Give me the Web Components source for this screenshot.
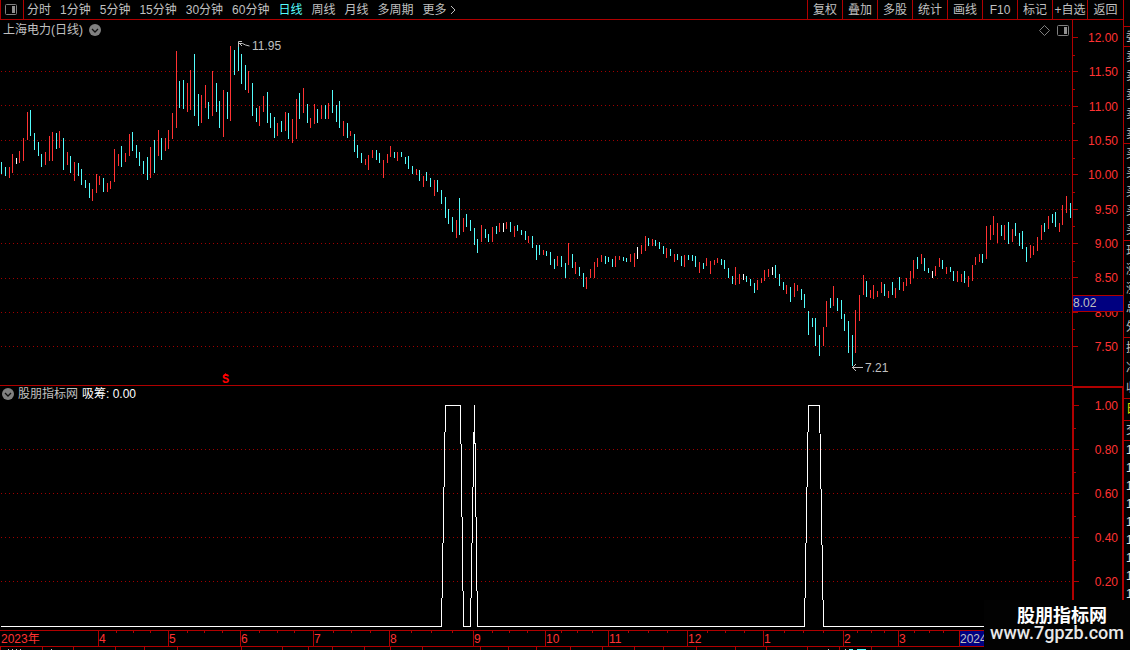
<!DOCTYPE html>
<html lang="zh-CN">
<head>
<meta charset="utf-8">
<title>上海电力(日线)</title>
<style>
  :root {
    --line: #b00000;
    --up: #ff3232;
    --down: #54fcfc;
    --text: #c0c0c0;
  }

  body {
    margin: 0;
    background: #000;
    color: var(--text);
    font: 12px/14px "Liberation Sans", "Noto Sans CJK SC", sans-serif;
  }
</style>
</head>
<body>
<stock-terminal></stock-terminal>

<script>
// x, high, low, colour (r = up, c = down, w = unchanged)
const BARS = `
1 162 174 c,5 167 176 c,9 167 178 r,12 154 173 r,16 158 164 w,19 151 163 r,23 138 161 r,27 112 140 r,
30 110 136 c,34 133 150 c,38 142 156 c,41 154 167 c,45 152 165 r,49 136 161 r,52 132 161 r,56 133 149 c,
59 131 148 r,63 138 170 c,67 152 165 r,70 156 173 c,74 162 181 r,78 163 176 c,81 169 185 c,85 180 188 c,
89 183 198 c,92 189 201 r,96 174 193 r,99 176 185 r,103 178 192 c,107 183 192 r,110 181 189 r,114 149 182 r,
118 154 166 r,121 146 167 c,125 153 162 r,129 134 156 r,132 132 151 c,136 145 158 c,139 152 166 c,143 161 174 c,
147 157 180 c,150 147 178 r,154 140 173 c,158 130 156 r,161 138 160 c,165 138 151 r,168 130 149 r,172 113 139 r,
176 51 128 r,179 81 108 c,183 80 109 c,187 83 112 r,190 70 110 r,194 54 116 c,198 94 126 c,201 95 123 r,
205 85 108 r,208 102 119 c,212 71 116 r,216 83 112 c,219 101 128 c,223 90 137 r,227 92 119 c,230 46 121 r,
234 50 75 c,238 42 71 c,241 54 84 c,245 65 90 c,248 71 93 r,252 83 116 c,256 108 122 c,259 106 126 r,
263 96 112 r,267 92 123 c,270 113 128 c,274 117 138 c,277 123 136 r,281 121 132 c,285 112 131 r,288 113 139 c,
292 119 143 r,296 99 139 r,299 93 119 c,303 88 113 r,307 104 123 c,310 118 128 r,314 104 124 r,317 109 123 c,
321 105 119 r,325 105 119 c,328 103 119 r,332 90 113 c,336 105 122 c,339 101 128 c,343 121 136 r,347 123 138 c,
350 131 136 r,354 134 152 c,357 145 158 c,361 153 163 c,365 159 165 r,368 155 170 r,372 150 158 r,376 150 160 c,
379 153 163 c,383 160 178 r,387 154 163 r,390 146 157 r,394 152 158 c,397 152 161 r,401 152 157 c,405 157 164 c,
408 156 169 c,412 166 174 c,416 169 175 r,419 170 181 c,423 176 187 r,426 172 181 c,430 178 187 c,434 180 196 r,
437 180 192 c,441 190 204 c,445 197 218 c,448 209 224 c,452 217 232 c,456 220 238 r,459 198 235 c,463 218 232 r,
466 214 227 c,470 220 231 c,474 228 245 c,477 239 253 c,481 225 242 r,485 229 238 c,488 234 242 c,492 227 242 r,
496 226 234 c,499 223 232 r,503 223 232 w,506 222 229 r,510 222 232 c,514 226 237 r,517 225 231 c,521 230 235 c,
525 231 240 c,528 236 243 r,532 236 248 c,536 245 260 c,539 245 255 c,543 250 255 r,546 251 256 c,550 252 265 c,
554 259 269 c,557 256 266 r,561 256 267 c,565 263 278 c,568 243 265 r,572 254 268 c,575 262 274 r,579 267 276 c,
583 273 287 c,586 277 289 r,590 269 278 r,594 262 278 r,597 258 267 r,601 255 262 r,605 256 264 c,608 257 262 c,
612 259 267 c,615 256 267 r,619 256 260 r,623 257 261 c,626 258 262 c,630 254 262 r,634 253 267 r,637 247 259 w,
641 245 254 r,645 236 251 r,648 238 246 c,652 239 246 r,655 240 246 c,659 242 249 c,663 246 254 c,666 248 258 r,
670 249 256 c,674 254 262 r,677 254 260 c,681 256 266 c,684 255 267 r,688 255 260 c,692 255 261 c,695 256 267 c,
699 262 273 r,703 263 269 c,706 258 266 r,710 261 274 r,714 260 265 r,717 258 263 r,721 259 265 c,724 260 269 c,
728 268 278 c,732 276 284 c,735 267 285 r,739 274 284 r,743 274 280 w,746 276 282 c,750 279 286 c,754 283 293 c,
757 280 290 r,761 278 283 r,764 270 281 r,768 269 277 r,772 267 275 w,775 265 278 c,779 274 286 c,783 282 290 c,
786 285 294 r,790 287 302 c,794 283 297 r,797 285 291 r,801 289 300 c,804 294 308 c,808 311 335 c,812 318 327 c,
815 318 346 c,819 335 356 c,823 327 346 r,826 301 327 r,830 298 308 c,833 286 306 r,837 298 311 c,841 300 319 c,
844 314 331 c,848 321 353 c,852 335 366 c,855 310 353 r,859 295 321 r,863 275 295 r,866 281 297 c,870 290 298 r,
873 285 299 r,877 291 297 r,881 282 293 r,884 284 296 c,888 291 298 r,892 282 295 c,895 288 298 r,899 277 290 c,
903 282 291 r,906 278 286 r,910 271 284 r,913 260 278 r,917 257 269 c,921 254 264 r,924 258 271 c,928 268 273 c,
932 271 278 w,935 266 276 r,939 258 267 r,942 260 269 c,946 267 274 r,950 267 272 c,953 271 281 c,957 271 282 r,
961 274 282 r,964 271 283 c,968 276 287 r,972 265 281 r,975 257 265 r,979 254 262 r,982 254 263 c,986 226 259 r,
990 225 240 r,993 216 235 r,997 223 243 r,1001 225 236 c,1004 225 240 r,1008 222 244 c,1012 229 242 r,
1015 223 236 c,1019 233 246 c,1022 231 249 c,1026 247 262 c,1030 245 258 r,1033 246 255 r,1037 237 251 r,
1041 225 240 r,1044 223 232 c,1048 216 229 r,1052 214 223 c,1055 212 227 c,1059 223 232 r,1062 205 225 r,
1066 196 213 r,1070 203 218 c`;

const COLORS = { r: "#ff3232", c: "#54fcfc", w: "#ffffff" };

const dottedRows = (rows) => rows
  .map((y) => `<path d="M1 ${y}.5H1072" stroke="#a00000" stroke-dasharray="1 3"/>`)
  .join("");

const panelIcon = `
  <svg width="12" height="11" viewBox="0 0 12 11" aria-hidden="true">
    <rect x=".5" y=".5" width="11" height="10" rx="1" fill="none" stroke="#808080"/>
    <rect x="7" y="2" width="3" height="7" fill="#909090"/>
  </svg>`;

const chevronIcon = `
  <svg width="12" height="12" viewBox="0 0 12 12" aria-hidden="true">
    <circle cx="6" cy="6" r="6" fill="#808080"/>
    <path d="M3 5l3 3 3-3" fill="none" stroke="#101010" stroke-width="1.3"/>
  </svg>`;

const buttonReset = `
  button {
    margin: 0;
    padding: 0;
    border: 0;
    background: none;
    color: inherit;
    font: inherit;
    white-space: nowrap;
    cursor: pointer;
  }
  button svg { display: block; }`;

class StockTerminal extends HTMLElement {
  constructor() {
    super();
    this.attachShadow({ mode: "open" });
  }

  connectedCallback() {
    this.shadowRoot.innerHTML = `
      <style>
        :host {
          display: flex;
          position: relative;
          height: 100vh;
          overflow: hidden;
        }
        main {
          flex: 1;
          min-width: 0;
          display: flex;
          flex-direction: column;
        }
        .pane { display: flex; min-height: 0; }
        .price { flex: 366 0 0; }
        .indicator { flex: 244 0 0; }
      </style>
      <main>
        <period-bar></period-bar>
        <div class="pane price">
          <price-chart></price-chart>
          <value-axis labels="12.00,11.50,11.00,10.50,10.00,9.50,9.00,8.50,8.00,7.50" current="8.02"></value-axis>
        </div>
        <div class="pane indicator">
          <indicator-chart></indicator-chart>
          <value-axis framed labels="1.00,0.80,0.60,0.40,0.20"></value-axis>
        </div>
        <time-axis></time-axis>
        <tab-edge></tab-edge>
      </main>
      <quote-strip></quote-strip>
      <site-mark>
        <span slot="name">股朋指标网</span>
        <span slot="url">www.7gpzb.com</span>
      </site-mark>
    `;
  }
}

class PeriodBar extends HTMLElement {
  constructor() {
    super();
    this.attachShadow({ mode: "open" });
  }

  connectedCallback() {
    const periods = ["分时", "1分钟", "5分钟", "15分钟", "30分钟", "60分钟", "日线", "周线", "月线", "多周期"];
    const tools = ["复权", "叠加", "多股", "统计", "画线", "F10", "标记", "+自选", "返回"];

    this.shadowRoot.innerHTML = `
      <style>
        :host {
          display: flex;
          box-sizing: border-box;
          height: 20px;
          border-bottom: 1px solid var(--line);
        }
        ${buttonReset}
        .layout {
          box-sizing: border-box;
          width: 24px;
          padding: 0 4px;
          border: solid var(--line);
          border-width: 0 1px;
        }
        nav {
          flex: 1;
          display: flex;
          gap: 9px;
          padding-left: 3px;
          overflow: hidden;
        }
        .active { color: var(--down); }
        .more { display: flex; align-items: center; gap: 3px; }
        .tools { display: flex; }
        .tools button {
          box-sizing: border-box;
          width: 35px;
          border-left: 1px solid var(--line);
        }
        .tools button:last-child { width: 36px; }
      </style>
      <button class="layout" aria-label="布局">${panelIcon}</button>
      <nav>
        ${periods.map((p) => `<button${p === "日线" ? ' class="active"' : ""}>${p}</button>`).join("")}
        <button class="more">更多
          <svg width="7" height="10" viewBox="0 0 7 10" aria-hidden="true"><path d="M1 1l4 4-4 4" fill="none" stroke="#c0c0c0"/></svg>
        </button>
      </nav>
      <div class="tools">${tools.map((t) => `<button>${t}</button>`).join("")}</div>
    `;
  }
}

class PriceChart extends HTMLElement {
  constructor() {
    super();
    this.attachShadow({ mode: "open" });
  }

  connectedCallback() {
    const bars = BARS.trim().split(",").map((bar) => {
      const [x, high, low, kind] = bar.trim().split(" ");
      return `<rect x="${x}" y="${high}" width="1" height="${low - high}" fill="${COLORS[kind]}"/>`;
    }).join("");

    // marks follow the bars when the pane is resized
    const place = (x, y) => `left:${x / 1072 * 100}%;top:${(y - 20) / 365 * 100}%`;

    this.shadowRoot.innerHTML = `
      <style>
        :host {
          flex: 1;
          min-width: 0;
          display: block;
          position: relative;
          border-bottom: 1px solid var(--line);
        }
        ${buttonReset}
        .plot {
          position: absolute;
          inset: 0;
          width: 100%;
          height: 100%;
        }
        header {
          position: relative;
          display: flex;
          align-items: center;
          gap: 6px;
          padding: 3px 3px 0 3px;
        }
        h1 { margin: 0; font: inherit; }
        .end { margin-left: auto; display: flex; align-items: center; gap: 7px; }
        .mark {
          position: absolute;
          display: flex;
          align-items: center;
          gap: 2px;
        }
        .signal {
          flex-direction: column;
          gap: 0;
          color: #f00;
          font: bold 12px/9px "Liberation Mono", monospace;
        }
      </style>
      <svg class="plot" viewBox="0 20 1072 365" preserveAspectRatio="none" shape-rendering="crispEdges" aria-hidden="true">
        ${dottedRows([71, 105, 140, 174, 209, 243, 278, 312, 346])}
        ${bars}
      </svg>
      <header>
        <h1>上海电力(日线)</h1>
        <button aria-label="展开">${chevronIcon}</button>
        <div class="end">
          <button aria-label="标记">
            <svg width="11" height="11" viewBox="0 0 11 11"><path d="M5.500 .5l5 5-5 5-5-5z" fill="none" stroke="#808080"/></svg>
          </button>
          <button aria-label="侧栏">${panelIcon}</button>
        </div>
      </header>
      <div class="mark" style="${place(238, 39)}">
        <svg width="12" height="10" viewBox="0 0 12 10"><path d="M4 .5H.5V6M.5 2.500h4l3 1.500 4 1M1 2l3 3" fill="none" stroke="#c0c0c0"/></svg>
        11.95
      </div>
      <div class="mark" style="${place(852, 361)}">
        <svg width="11" height="10" viewBox="0 0 11 10"><path d="M0 4.500h11M4 1L.5 4.500 4 8" fill="none" stroke="#c0c0c0"/></svg>
        7.21
      </div>
      <div class="mark signal" style="${place(222, 373)}">
        <svg width="5" height="3" viewBox="0 0 5 3"><path d="M2.500 0L5 3H0z" fill="#f00"/></svg>
        S
      </div>
    `;
  }
}

class IndicatorChart extends HTMLElement {
  constructor() {
    super();
    this.attachShadow({ mode: "open" });
  }

  connectedCallback() {
    this.shadowRoot.innerHTML = `
      <style>
        :host {
          flex: 1;
          min-width: 0;
          display: block;
          position: relative;
        }
        ${buttonReset}
        .plot {
          position: absolute;
          inset: 0;
          width: 100%;
          height: 100%;
        }
        header {
          position: relative;
          display: flex;
          align-items: center;
          gap: 4px;
          padding: 1px 2px;
        }
        output { color: #fff; }
      </style>
      <svg class="plot" viewBox="0 386 1072 244" preserveAspectRatio="none" shape-rendering="crispEdges" aria-hidden="true">
        ${dottedRows([449, 493, 537, 581])}
        <path transform="translate(.5 .5)" fill="none" stroke="#fff"
          d="M0 626H441L445 405H460L463 626H470L474 405L477 626H804L808 405H819L823 626H1072"/>
      </svg>
      <header>
        <button aria-label="指标">${chevronIcon}</button>
        <span>股朋指标网</span>
        <output>吸筹: 0.00</output>
      </header>
    `;
  }
}

class ValueAxis extends HTMLElement {
  constructor() {
    super();
    this.attachShadow({ mode: "open" });
  }

  connectedCallback() {
    const labels = this.getAttribute("labels").split(",");
    const current = this.getAttribute("current");

    this.shadowRoot.innerHTML = `
      <style>
        :host {
          box-sizing: border-box;
          position: relative;
          display: flex;
          flex-direction: column;
          justify-content: space-between;
          width: 51px;
          padding: 11px 5px 32px 0;
          border-left: 1px solid var(--line);
          color: var(--up);
          text-align: right;
        }
        :host([framed]) {
          padding: 11px 4px 41px 0;
          border: solid var(--line);
          border-width: 2px 1px 0 2px;
        }
        .row { position: relative; }
        .row::before {
          content: "";
          position: absolute;
          left: 0;
          top: 6px;
          width: 5px;
          height: 1px;
          background: var(--line);
        }
        /* half steps */
        .half {
          width: 2px;
          height: 1px;
          background: var(--line);
        }
        .current {
          position: absolute;
          top: 75%;
          left: 0;
          right: 0;
          height: 15px;
          border: solid var(--line);
          border-width: 1px 0;
          background: #000080;
          color: var(--text);
          text-align: left;
        }
      </style>
      ${labels.map((l) => `<div class="row">${l}</div>`).join('<div class="half"></div>')}
      ${current ? `<div class="current">${current}</div>` : ""}
    `;
  }
}

class TimeAxis extends HTMLElement {
  constructor() {
    super();
    this.attachShadow({ mode: "open" });
  }

  connectedCallback() {
    // label and share of the width
    const months = [
      ["2023年", 98], ["4", 70], ["5", 72], ["6", 73], ["7", 76], ["8", 84], ["9", 72], ["10", 63],
      ["11", 79], ["12", 76], ["1", 80], ["2", 55], ["3", 61], ["2024", 164],
    ];

    this.shadowRoot.innerHTML = `
      <style>
        :host {
          box-sizing: border-box;
          display: grid;
          grid-template-columns: ${months.map(([, share]) => `minmax(0, ${share}fr)`).join(" ")};
          height: 17px;
          border: solid var(--line);
          border-width: 1px 0;
          color: var(--up);
          line-height: 16px;
        }
        .month {
          overflow: hidden;
          border-left: 1px solid var(--line);
          background:
            linear-gradient(var(--line), var(--line)) 25% 0 / 1px 2px no-repeat,
            linear-gradient(var(--line), var(--line)) 50% 0 / 1px 2px no-repeat,
            linear-gradient(var(--line), var(--line)) 75% 0 / 1px 2px no-repeat;
        }
        .month:first-of-type { border: 0; padding-left: 1px; background: none; }
        .month:last-of-type { background: #000080; color: var(--text); }
      </style>
      ${months.map(([label]) => `<div class="month">${label}</div>`).join("")}
    `;
  }
}

// upper edge of the tab row, cut off by the window
class TabEdge extends HTMLElement {
  constructor() {
    super();
    this.attachShadow({ mode: "open" });
  }

  connectedCallback() {
    const tabs = [0, 42, 73, 115, 144, 177, 241, 282, 308, 332, 364, 390, 422, 480, 508, 536, 570, 602, 634, 663, 696, 735, 766, 807, 839, 871];

    this.shadowRoot.innerHTML = `
      <style>
        :host { display: block; height: 3px; }
        svg { display: block; width: 100%; height: 100%; }
      </style>
      <svg viewBox="0 0 1123 3" preserveAspectRatio="none" shape-rendering="crispEdges" aria-hidden="true">
        ${tabs.map((x) => `<rect x="${x}" y="0" width="1" height="3" fill="#b00000"/>`).join("")}
        <path d="M8 2h1v1h-1zM12 2h1v1h-1zM16 2h1v1h-1zM20 2h1v1h-1zM51 2h1v1h-1zM828 2h1v1h-1zM845 2h1v1h-1z" fill="#c0c0c0"/>
        <path d="M849 2h4v1h-4zM857 2h9v1h-9z" fill="#54fcfc"/>
      </svg>
    `;
  }
}

class QuoteStrip extends HTMLElement {
  constructor() {
    super();
    this.attachShadow({ mode: "open" });
  }

  connectedCallback() {
    const groups = [
      ["head", 26, ""], ["", 20, "委"], ["", 97, "卖卖卖卖卖"], ["", 97, "买买买买买"],
      ["", 97, "现涨涨总外"], ["", 61, "换净收"], ["accent", 21, "日"], ["", 19, "交"],
      ["last", 212, "111111111"],
    ];

    this.shadowRoot.innerHTML = `
      <style>
        :host {
          box-sizing: border-box;
          display: flex;
          flex-direction: column;
          width: 7px;
          overflow: hidden;
          border-left: 1px solid var(--line);
        }
        .group {
          box-sizing: border-box;
          min-height: 0;
          display: flex;
          flex-direction: column;
          justify-content: space-around;
          padding-left: 2px;
          border-bottom: 1px solid var(--line);
        }
        .last {
          justify-content: flex-start;
          border: 0;
          color: #e0e0e0;
          line-height: 18px;
        }
        .accent { color: #e0e000; }
      </style>
      ${groups.map(([name, share, text]) => `
        <div class="group ${name}" style="flex:${share} 0 0">
          ${[...text].map((c) => `<span>${c}</span>`).join("")}
        </div>`).join("")}
    `;
  }
}

class SiteMark extends HTMLElement {
  constructor() {
    super();
    this.attachShadow({ mode: "open" });
    this.shadowRoot.innerHTML = `
      <style>
        :host {
          box-sizing: border-box;
          position: absolute;
          right: 0;
          bottom: 0;
          width: 146px;
          height: 50px;
          padding-top: 4px;
          background: #020202;
          color: #fff;
          text-align: center;
        }
        .name {
          padding-left: 10px;
          font: bold 18px/20px "Noto Sans CJK SC", sans-serif;
        }
        .url {
          color: #e8e8e8;
          font: 500 18px/18px Roboto, sans-serif;
        }
      </style>
      <div class="name"><slot name="name"></slot></div>
      <div class="url"><slot name="url"></slot></div>
    `;
  }
}

customElements.define("period-bar", PeriodBar);
customElements.define("price-chart", PriceChart);
customElements.define("indicator-chart", IndicatorChart);
customElements.define("value-axis", ValueAxis);
customElements.define("time-axis", TimeAxis);
customElements.define("tab-edge", TabEdge);
customElements.define("quote-strip", QuoteStrip);
customElements.define("site-mark", SiteMark);
customElements.define("stock-terminal", StockTerminal);
</script>
</body>
</html>
